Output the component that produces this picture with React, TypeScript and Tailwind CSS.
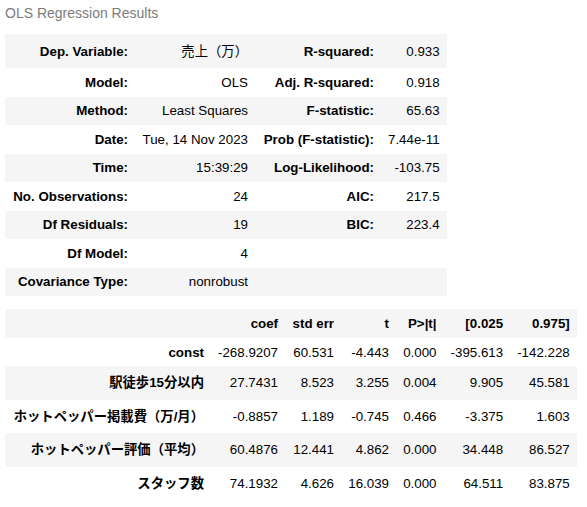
const FONT = "font-['Liberation_Sans','Noto_Sans_CJK_JP',Arial,sans-serif]";

type Row = { cells: string[]; tall?: boolean };

const summaryRows: Row[] = [
  { cells: ["Dep. Variable:", "売上（万）", "R-squared:", "0.933"], tall: true },
  { cells: ["Model:", "OLS", "Adj. R-squared:", "0.918"] },
  { cells: ["Method:", "Least Squares", "F-statistic:", "65.63"] },
  { cells: ["Date:", "Tue, 14 Nov 2023", "Prob (F-statistic):", "7.44e-11"] },
  { cells: ["Time:", "15:39:29", "Log-Likelihood:", "-103.75"] },
  { cells: ["No. Observations:", "24", "AIC:", "217.5"] },
  { cells: ["Df Residuals:", "19", "BIC:", "223.4"] },
  { cells: ["Df Model:", "4", "", ""] },
  { cells: ["Covariance Type:", "nonrobust", "", ""] },
];

const summaryWidths = ["w-[130px]", "w-[120px]", "w-[126px]", "w-[65px]"];

const coefHeader = ["", "coef", "std err", "t", "P>|t|", "[0.025", "0.975]"];

const coefRows: Row[] = [
  { cells: ["const", "-268.9207", "60.531", "-4.443", "0.000", "-395.613", "-142.228"] },
  { cells: ["駅徒歩15分以内", "27.7431", "8.523", "3.255", "0.004", "9.905", "45.581"], tall: true },
  { cells: ["ホットペッパー掲載費（万/月）", "-0.8857", "1.189", "-0.745", "0.466", "-3.375", "1.603"], tall: true },
  { cells: ["ホットペッパー評価（平均）", "60.4876", "12.441", "4.862", "0.000", "34.448", "86.527"], tall: true },
  { cells: ["スタッフ数", "74.1932", "4.626", "16.039", "0.000", "64.511", "83.875"], tall: true },
];

const coefWidths = ["w-[206px]", "w-[74px]", "w-[56px]", "w-[55px]", "w-[47.5px]", "w-[66.5px]", "w-[66.5px]"];

export default function App() {
  return (
    <div className={`${FONT} h-[507px] w-[587px] overflow-hidden bg-white text-black`}>
      {/* caption */}
      <div className="h-[34px] pl-[5px] pt-[3px] text-[14px] leading-[20px] text-[#7b7b7b]">
        OLS Regression Results
      </div>

      {/* model summary */}
      <table className="ml-[5px] table-fixed border-collapse text-[13.33px] leading-[15px]">
        <tbody>
          {summaryRows.map((row, i) => (
            <tr
              key={i}
              className={`${i % 2 === 0 ? "bg-[#f5f5f5]" : "bg-white"} ${row.tall ? "h-[34px]" : "h-[28.5px]"}`}
            >
              {row.cells.map((c, j) => (
                <td
                  key={j}
                  className={`${summaryWidths[j]} px-[7px] py-0 text-right align-middle whitespace-nowrap ${j % 2 === 0 ? "font-bold" : ""}`}
                >
                  {c}
                </td>
              ))}
            </tr>
          ))}
        </tbody>
      </table>

      {/* coefficients */}
      <table className="ml-[5px] mt-[13px] table-fixed border-collapse text-[13.33px] leading-[15px]">
        <tbody>
          <tr className="h-[29px] bg-[#f5f5f5]">
            {coefHeader.map((h, j) => (
              <th key={j} className={`${coefWidths[j]} px-[7px] py-0 text-right align-middle font-bold whitespace-nowrap`}>
                {h}
              </th>
            ))}
          </tr>
          {coefRows.map((row, i) => (
            <tr
              key={i}
              className={`${i % 2 === 1 ? "bg-[#f5f5f5]" : "bg-white"} ${row.tall ? "h-[33.5px]" : "h-[28px]"}`}
            >
              {row.cells.map((c, j) => (
                <td
                  key={j}
                  className={`px-[7px] py-0 text-right align-middle whitespace-nowrap ${j === 0 ? "font-bold" : ""}`}
                >
                  {c}
                </td>
              ))}
            </tr>
          ))}
        </tbody>
      </table>
    </div>
  );
}
